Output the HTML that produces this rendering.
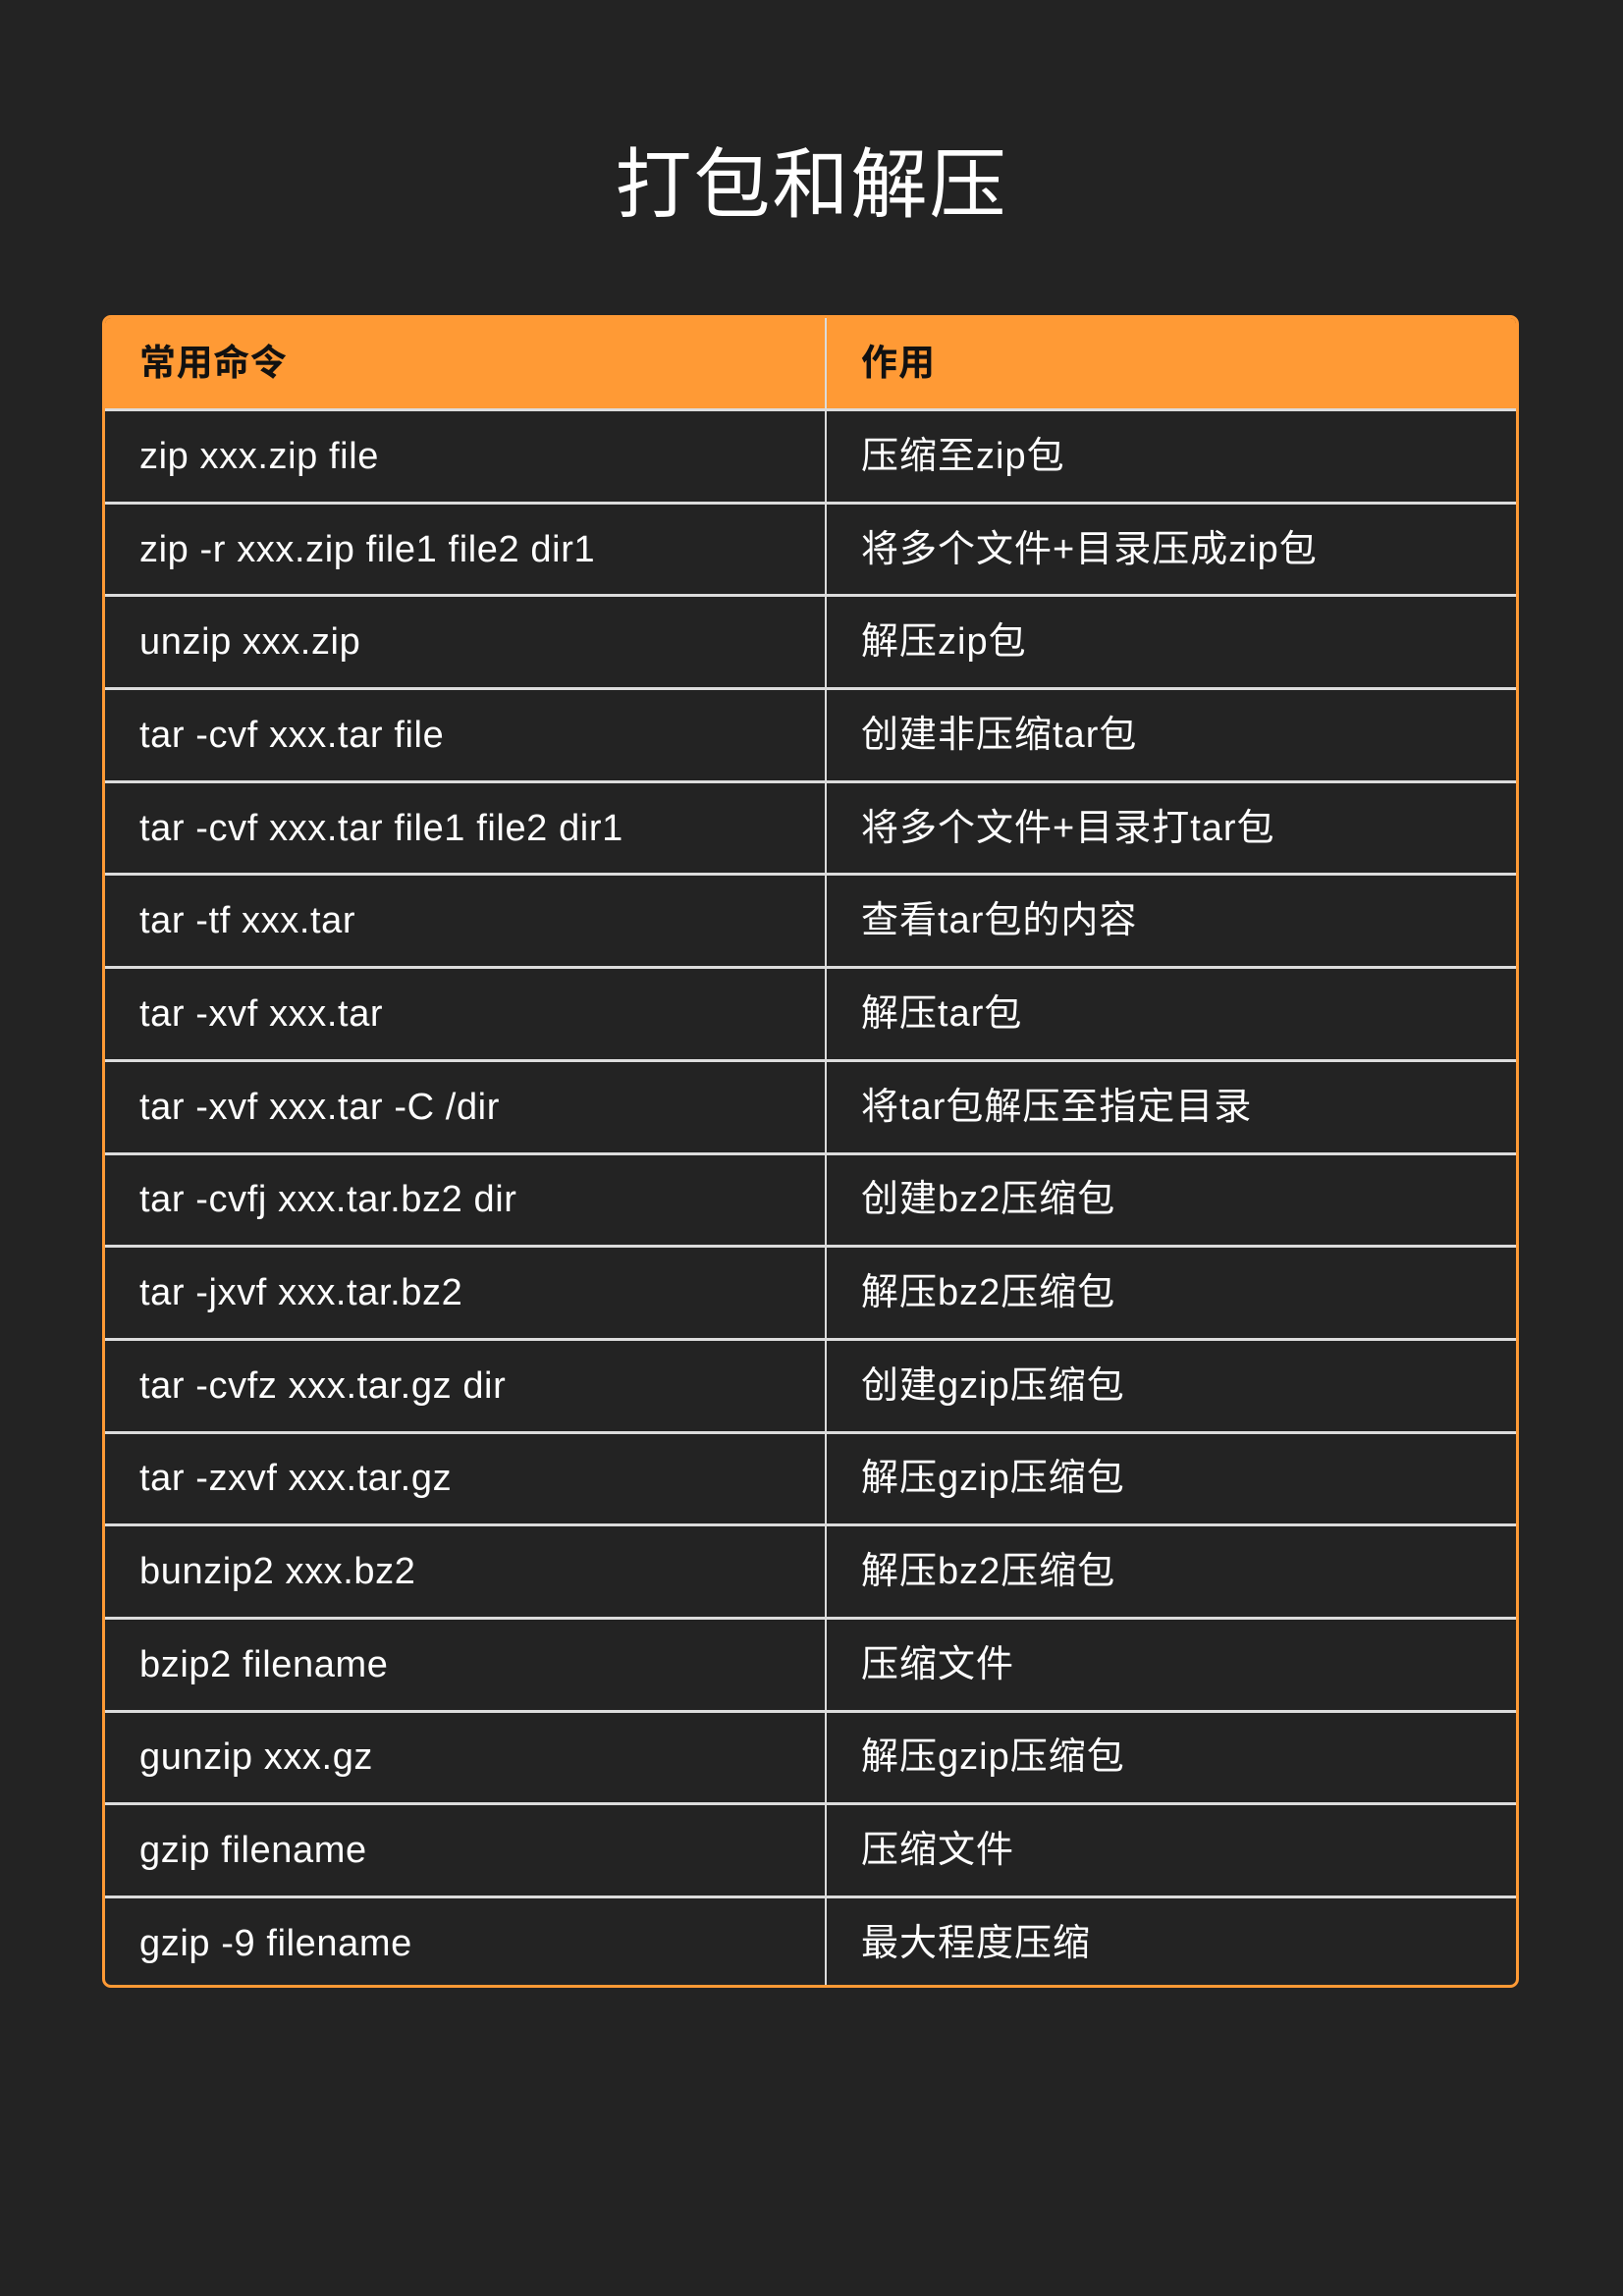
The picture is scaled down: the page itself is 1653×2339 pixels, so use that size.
<!DOCTYPE html>
<html><head><meta charset="utf-8"><style>
body{margin:0;width:1653px;height:2339px;background:#232323;font-family:"Liberation Sans","Noto Sans CJK SC",sans-serif;color:#fff;position:relative;overflow:hidden}
h1{position:absolute;top:135px;left:0;width:1653px;text-align:center;margin:0;font-size:78px;font-weight:normal;line-height:106px;letter-spacing:2px}
.t{position:absolute;left:104px;top:321px;width:1443px;height:1704px;border:3px solid #ff9a35;box-sizing:border-box;border-radius:9px;overflow:hidden}
.r{height:94.7px;display:flex;border-top:3px solid #dcdcdc;box-sizing:border-box}
.r div{display:flex;align-items:center;font-size:38px;line-height:44px;padding-left:35px;box-sizing:border-box;letter-spacing:1px}
.r div span{display:block;line-height:44px;height:44px}
.r div:first-child{width:735px;border-right:2px solid #dcdcdc;letter-spacing:0.6px}
.h{background:#ff9a35;border-top:none;height:92px;color:#111;font-weight:bold}
.h div{font-size:37px}
</style></head><body>
<h1>打包和解压</h1>
<div class="t">
<div class="r h"><div><span>常用命令</span></div><div><span>作用</span></div></div>
<div class="r"><div><span>zip xxx.zip file</span></div><div><span>压缩至zip包</span></div></div>
<div class="r"><div><span>zip -r xxx.zip file1 file2 dir1</span></div><div><span>将多个文件+目录压成zip包</span></div></div>
<div class="r"><div><span>unzip xxx.zip</span></div><div><span>解压zip包</span></div></div>
<div class="r"><div><span>tar -cvf xxx.tar file</span></div><div><span>创建非压缩tar包</span></div></div>
<div class="r"><div><span>tar -cvf xxx.tar file1 file2 dir1</span></div><div><span>将多个文件+目录打tar包</span></div></div>
<div class="r"><div><span>tar -tf xxx.tar</span></div><div><span>查看tar包的内容</span></div></div>
<div class="r"><div><span>tar -xvf xxx.tar</span></div><div><span>解压tar包</span></div></div>
<div class="r"><div><span>tar -xvf xxx.tar -C /dir</span></div><div><span>将tar包解压至指定目录</span></div></div>
<div class="r"><div><span>tar -cvfj xxx.tar.bz2 dir</span></div><div><span>创建bz2压缩包</span></div></div>
<div class="r"><div><span>tar -jxvf xxx.tar.bz2</span></div><div><span>解压bz2压缩包</span></div></div>
<div class="r"><div><span>tar -cvfz xxx.tar.gz dir</span></div><div><span>创建gzip压缩包</span></div></div>
<div class="r"><div><span>tar -zxvf xxx.tar.gz</span></div><div><span>解压gzip压缩包</span></div></div>
<div class="r"><div><span>bunzip2 xxx.bz2</span></div><div><span>解压bz2压缩包</span></div></div>
<div class="r"><div><span>bzip2 filename</span></div><div><span>压缩文件</span></div></div>
<div class="r"><div><span>gunzip xxx.gz</span></div><div><span>解压gzip压缩包</span></div></div>
<div class="r"><div><span>gzip filename</span></div><div><span>压缩文件</span></div></div>
<div class="r"><div><span>gzip -9 filename</span></div><div><span>最大程度压缩</span></div></div>
</div>
</body></html>
